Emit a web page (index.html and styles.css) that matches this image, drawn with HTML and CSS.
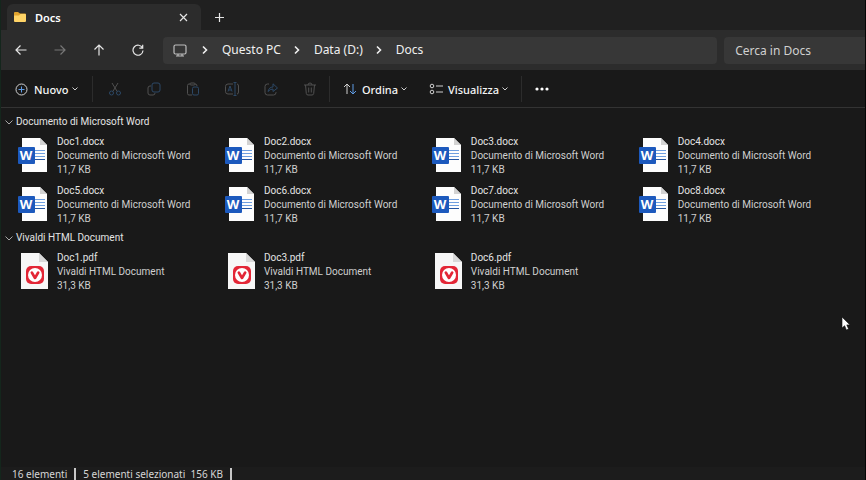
FILE: index.html
```html
<!DOCTYPE html>
<html lang="it">
<head>
<meta charset="utf-8">
<title>Docs</title>
<link rel="stylesheet" href="styles.css">
</head>
<body>
<svg class="defs" aria-hidden="true">
  <symbol id="chev" viewBox="0 0 8 8"><path d="M1.500 2.500 4 5l2.500-2.500"/></symbol>
  <symbol id="next" viewBox="0 0 8 10"><path d="M2 1.500 5.500 5 2 8.500"/></symbol>
  <symbol id="word" viewBox="0 0 34 38">
    <path fill="#fdfdfd" d="M5 2h18l7 7v27H5z"/>
    <path fill="#d2d2d2" d="M23 2v7h7z"/>
    <path stroke="#6f9fe0" d="M18 14.500h10M18 17.500h10M18 20.500h10"/>
    <path stroke="#24549f" d="M18 23.500h10"/>
    <rect x="1" y="11" width="17" height="17" rx="1" fill="#1c59bd"/>
  </symbol>
  <symbol id="pdf" viewBox="0 0 34 38">
    <path fill="#f7f7f7" d="M4 1h18l9 9v27H4z"/>
    <path fill="#d9d9d9" d="M22 1v9h9z"/>
    <rect x="9" y="14" width="18" height="18" rx="5" fill="#e32636"/>
    <circle cx="18" cy="23" r="7" fill="#fff"/>
    <path stroke="#e32636" stroke-width="2.600" stroke-linecap="round" stroke-linejoin="round" fill="none" d="m14.800 20.500 3.200 5.500 3.200-5.500"/>
  </symbol>
</svg>
<div class="window">
  <header class="tabs">
    <div class="tab">
      <svg width="14" height="12" viewBox="0 0 14 12"><path fill="#e0a32e" d="M1 2q0-1 1-1h3l2 1.500h5q1 0 1 1V6H1z"/><path fill="#ffd467" d="M1 4.500h5L7.500 3H12q1 0 1 1v6q0 1-1 1H2q-1 0-1-1z"/></svg>
      <span class="tab-name">Docs</span>
      <button class="tab-close" aria-label="Chiudi scheda"><svg width="9" height="9" viewBox="0 0 9 9"><path d="m1 1 7 7M8 1 1 8"/></svg></button>
    </div>
    <button class="tab-add" aria-label="Nuova scheda"><svg width="9" height="9" viewBox="0 0 9 9"><path d="M4.500 0v9M0 4.500h9"/></svg></button>
  </header>
  <nav class="nav">
    <button class="nav-btn" aria-label="Indietro"><svg width="12" height="12" viewBox="0 0 12 12"><path d="M11.500 6H1M5.500 1.500 1 6l4.500 4.500"/></svg></button>
    <button class="nav-btn" aria-label="Avanti" disabled><svg width="12" height="12" viewBox="0 0 12 12"><path d="M.5 6H11M6.500 1.500 11 6l-4.500 4.500"/></svg></button>
    <button class="nav-btn" aria-label="Su"><svg width="12" height="12" viewBox="0 0 12 12"><path d="M6 11.500V1M1.500 5.500 6 1l4.500 4.500"/></svg></button>
    <button class="nav-btn" aria-label="Aggiorna"><svg width="12" height="12" viewBox="0 0 12 12"><path d="M10.500 4A5 5 0 1 0 11 6.500M10.700.8v3.400H7.300"/></svg></button>
    <div class="address">
      <svg class="pc" width="14" height="13" viewBox="0 0 14 13"><rect x="1" y="1" width="12" height="9" rx="1.500"/><path d="M3 12h8M5 10v2M9 10v2"/></svg>
      <svg class="next" width="8" height="10"><use href="#next"/></svg>
      <a href="#">Questo PC</a>
      <svg class="next" width="8" height="10"><use href="#next"/></svg>
      <a href="#">Data (D:)</a>
      <svg class="next" width="8" height="10"><use href="#next"/></svg>
      <a href="#">Docs</a>
    </div>
    <input class="search" type="search" aria-label="Cerca in Docs" placeholder="Cerca in Docs">
  </nav>
  <div class="toolbar">
    <button class="cmd new"><svg width="13" height="13" viewBox="0 0 13 13"><circle cx="6.500" cy="6.500" r="5.500"/><path class="blue" d="M6.500 3.500v6M3.500 6.500h6"/></svg><span>Nuovo</span><svg class="chev" width="8" height="8"><use href="#chev"/></svg></button>
    <div class="tools">
      <button class="tool" aria-label="Taglia"><svg viewBox="0 0 14 14"><path d="m4 1 5.200 8.500M10 1 4.800 9.500"/><g class="blue"><circle cx="3.500" cy="11" r="2"/><circle cx="10.500" cy="11" r="2"/></g></svg></button>
      <button class="tool" aria-label="Copia"><svg viewBox="0 0 14 14"><path d="M4 4H3Q1 4 1 6v5q0 2 2 2h3q2 0 2-2"/><rect class="blue" x="5" y="1" width="8" height="9" rx="2"/></svg></button>
      <button class="tool" aria-label="Incolla"><svg viewBox="0 0 14 14"><path d="M6 13H3q-1.500 0-1.500-1.500v-8Q1.500 2 3 2h1M9 2q2 0 2 2"/><rect x="4" y="1" width="5" height="2" rx="1"/><rect class="blue" x="6.500" y="5" width="6" height="8" rx="1.500"/></svg></button>
      <button class="tool" aria-label="Rinomina"><svg viewBox="0 0 14 14"><path d="M8 2H3Q.5 2 .5 4.500v5Q.5 12 3 12h5M12 2q1.500 0 1.500 2v6q0 2-1.500 2"/><path class="blue" d="m3 9.500 2-5.500 2 5.500M3.700 8h2.600M8.500.5h3M10 .5v13M8.500 13.500h3"/></svg></button>
      <button class="tool" aria-label="Condividi"><svg viewBox="0 0 14 14"><path d="M5 2H3.500Q1 2 1 4.500v6Q1 13 3.500 13h6q2.500 0 2.500-2.500V10"/><path class="blue" d="M4 9.500Q5 5 9 5V1.800L13.500 6 9 9.500V7Q6 7 4 9.500z"/></svg></button>
      <button class="tool" aria-label="Elimina"><svg viewBox="0 0 14 14"><path d="M1 3h12M5 3q0-2 2-2t2 2M2.500 3l.8 8.500Q3.500 13 5 13h4q1.500 0 1.700-1.500L11.500 3M5.700 5.500v5M8.300 5.500v5"/></svg></button>
    </div>
    <button class="cmd sort"><svg width="14" height="12" viewBox="0 0 14 12"><path d="M4 11V1M1 4l3-3 3 3"/><path class="blue" d="M10 1v10M7 8l3 3 3-3"/></svg><span>Ordina</span><svg class="chev" width="8" height="8"><use href="#chev"/></svg></button>
    <button class="cmd view"><svg width="14" height="12" viewBox="0 0 14 12"><circle cx="3" cy="3" r="1.800"/><circle cx="3" cy="9" r="1.800"/><path d="M7 3h7M7 9h7"/></svg><span>Visualizza</span><svg class="chev" width="8" height="8"><use href="#chev"/></svg></button>
    <button class="more" aria-label="Altro"><svg width="14" height="4" viewBox="0 0 14 4"><circle cx="2" cy="2" r="1.600"/><circle cx="7" cy="2" r="1.600"/><circle cx="12" cy="2" r="1.600"/></svg></button>
  </div>
  <main class="files">
    <section>
      <h2><svg class="fold" width="8" height="8" viewBox="0 0 8 8"><path d="m.5 2.500 3.500 3.500 3.500-3.500"/></svg>Documento di Microsoft Word</h2>
      <ul class="grid">
        <li><svg class="icon"><use href="#word"/><text x="9" y="24" text-anchor="middle">W</text></svg><div><b>Doc1.docx</b><p>Documento di Microsoft Word</p><p>11,7 KB</p></div></li>
        <li><svg class="icon"><use href="#word"/><text x="9" y="24" text-anchor="middle">W</text></svg><div><b>Doc2.docx</b><p>Documento di Microsoft Word</p><p>11,7 KB</p></div></li>
        <li><svg class="icon"><use href="#word"/><text x="9" y="24" text-anchor="middle">W</text></svg><div><b>Doc3.docx</b><p>Documento di Microsoft Word</p><p>11,7 KB</p></div></li>
        <li><svg class="icon"><use href="#word"/><text x="9" y="24" text-anchor="middle">W</text></svg><div><b>Doc4.docx</b><p>Documento di Microsoft Word</p><p>11,7 KB</p></div></li>
        <li><svg class="icon"><use href="#word"/><text x="9" y="24" text-anchor="middle">W</text></svg><div><b>Doc5.docx</b><p>Documento di Microsoft Word</p><p>11,7 KB</p></div></li>
        <li><svg class="icon"><use href="#word"/><text x="9" y="24" text-anchor="middle">W</text></svg><div><b>Doc6.docx</b><p>Documento di Microsoft Word</p><p>11,7 KB</p></div></li>
        <li><svg class="icon"><use href="#word"/><text x="9" y="24" text-anchor="middle">W</text></svg><div><b>Doc7.docx</b><p>Documento di Microsoft Word</p><p>11,7 KB</p></div></li>
        <li><svg class="icon"><use href="#word"/><text x="9" y="24" text-anchor="middle">W</text></svg><div><b>Doc8.docx</b><p>Documento di Microsoft Word</p><p>11,7 KB</p></div></li>
      </ul>
    </section>
    <section>
      <h2><svg class="fold" width="8" height="8" viewBox="0 0 8 8"><path d="m.5 2.500 3.500 3.500 3.500-3.500"/></svg>Vivaldi HTML Document</h2>
      <ul class="grid">
        <li><svg class="icon"><use href="#pdf"/></svg><div><b>Doc1.pdf</b><p>Vivaldi HTML Document</p><p>31,3 KB</p></div></li>
        <li><svg class="icon"><use href="#pdf"/></svg><div><b>Doc3.pdf</b><p>Vivaldi HTML Document</p><p>31,3 KB</p></div></li>
        <li><svg class="icon"><use href="#pdf"/></svg><div><b>Doc6.pdf</b><p>Vivaldi HTML Document</p><p>31,3 KB</p></div></li>
      </ul>
    </section>
  </main>
  <footer class="status"><span>16 elementi</span><span>5 elementi selezionati&nbsp; 156 KB</span></footer>
  <svg class="cursor" width="10" height="15" viewBox="0 0 10 15"><path d="M1 1v11l2.600-2.300L5.400 14l2.200-1-1.800-4.100H9z"/></svg>
</div>
</body>
</html>
```
FILE: styles.css
```css
* { box-sizing: border-box; }
body { margin: 0; background: #191919; color: #e4e4e4; font: 10px/14px "Noto Sans", "Open Sans", sans-serif; }
button, input { font: inherit; color: inherit; background: none; border: 0; padding: 0; }
a { color: inherit; text-decoration: none; }
p, h2, ul { margin: 0; padding: 0; }
b { font-weight: 400; }
svg { flex: none; fill: none; stroke: none; }
.defs { position: absolute; width: 0; height: 0; }
.window { position: relative; height: 100vh; display: flex; flex-direction: column; border-left: 1px solid #14261c; border-right: 1px solid #050505; overflow: hidden; }

.tabs { display: flex; height: 30px; padding: 4px 0 0 6px; background: #202020; }
.tab { display: flex; align-items: center; gap: 8px; width: 194px; padding: 0 13px 0 6px; background: #2c2c2c; border-radius: 6px 6px 0 0; }
.tab-name { flex: 1; padding-top: 2px; font-size: 11px; font-weight: 600; color: #fff; }
.tab-close, .tab-add { display: flex; align-items: center; justify-content: center; }
.tab-add { width: 36px; }
.tabs button svg, .nav-btn svg { stroke: #e6e6e6; stroke-width: 1.2; }

.nav { display: flex; align-items: center; height: 40px; background: #2c2c2c; }
.nav-btn { flex: none; display: flex; justify-content: center; width: 39px; }
.nav-btn:disabled { opacity: .4; }
.address { flex: 1; display: flex; align-items: center; height: 27px; margin: 0 7px 0 6px; padding-left: 10px; background: #373737; border-radius: 4px; font-size: 12px; color: #f0f0f0; }
.pc { stroke: #bdbdbd; stroke-width: 1.2; }
.next { margin: 0 13px 0 12px; stroke: #f0f0f0; stroke-width: 1.6; }
.pc + .next { margin-left: 14px; }
.search { flex: none; width: 16.3%; height: 27px; padding-left: 11px; background: #373737; border-radius: 4px 0 0 4px; font-size: 12px; }
.search::placeholder { color: #d0d0d0; opacity: 1; }

.toolbar { display: flex; align-items: center; height: 38px; padding: 1px 0 0 14px; border-bottom: 1px solid #333; }
.cmd { display: flex; align-items: center; gap: 5px; height: 26px; font-size: 11px; font-weight: 500; color: #f4f4f4; white-space: nowrap; }
.cmd svg { stroke: #d0d0d0; }
.cmd .blue { stroke: #5f9ce6; }
.cmd span { padding-top: 2px; }
.cmd .chev { margin-left: -3px; }
.new { width: 78px; gap: 6px; border-right: 1px solid #2c2c2c; }
.tools { display: flex; width: 237px; height: 26px; padding-left: 2px; border-right: 1px solid #2c2c2c; }
.tool { flex: 1; display: flex; align-items: center; justify-content: center; }
.tool svg { width: 14px; height: 14px; stroke: #505050; }
.tool .blue { stroke: #2c4866; }
.sort { width: 86px; padding-left: 13px; }
.view { width: 106px; padding-left: 13px; border-right: 1px solid #2c2c2c; }
.more { display: flex; padding-left: 13px; }
.more svg { fill: #fff; }

.files { flex: 1; padding: 5px 0 0 4px; font-family: Roboto, "Open Sans", sans-serif; }
h2 { display: flex; align-items: center; gap: 3px; height: 18px; margin-bottom: 4px; font-size: 10px; font-weight: 400; }
.fold { stroke: #a8a8a8; }
.grid { display: grid; grid-template-columns: repeat(4, 24.4%); row-gap: 7px; list-style: none; padding-left: 12px; margin-bottom: 3px; }
.grid li { display: flex; gap: 6px; white-space: nowrap; }
.icon { width: 34px; height: 38px; margin-top: 1px; }
.icon text { fill: #fff; font: 700 13px "Open Sans", sans-serif; }
.grid p { color: #cfcfcf; }

.status { display: flex; align-items: center; height: 14px; padding-left: 11px; margin-bottom: -1px; background: #1c1c1c; color: #d6d6d6; }
.status span { padding-right: 7px; margin-right: 7px; border-right: 2px solid #c8c8c8; line-height: 12px; }
.cursor { position: absolute; left: 840px; top: 316px; fill: #fff; stroke: #111; stroke-width: .6; }
```
